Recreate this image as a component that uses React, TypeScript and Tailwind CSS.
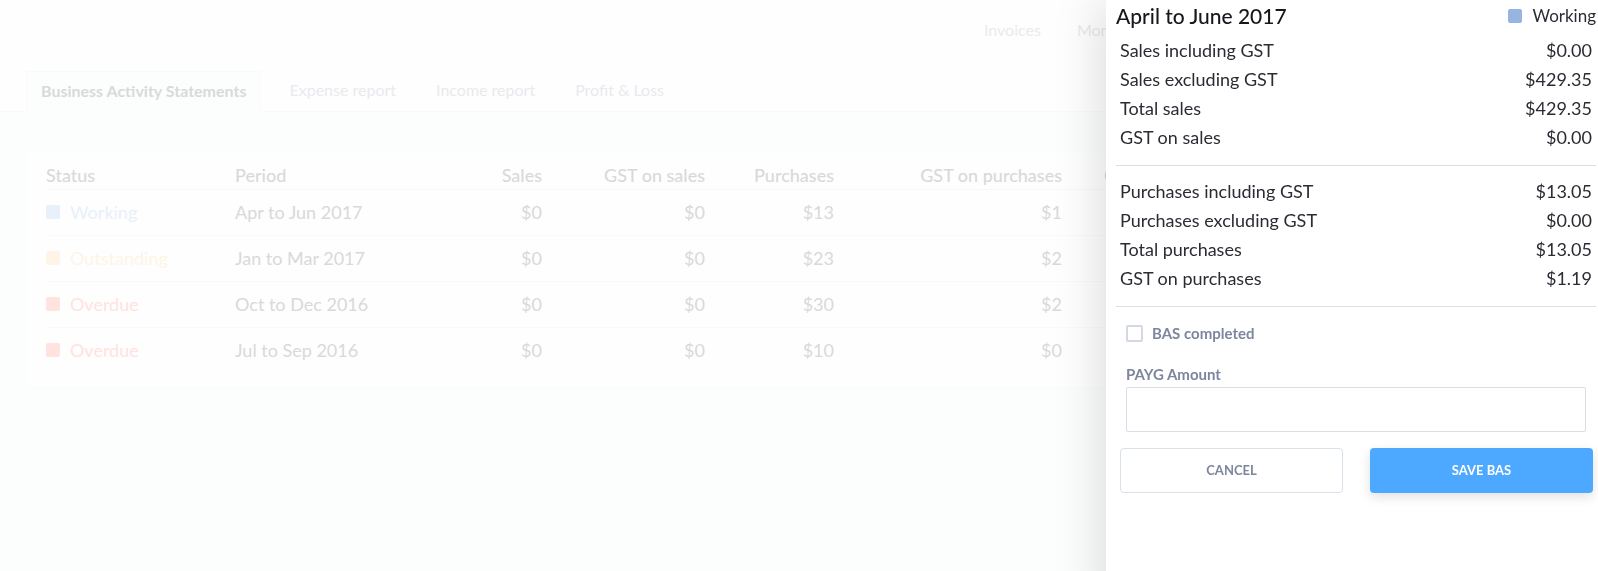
type Status = "Working" | "Outstanding" | "Overdue";

const tabs = ["Expense report", "Income report", "Profit & Loss"];

const statements: { status: Status; cells: string[] }[] = [
  { status: "Working", cells: ["Apr to Jun 2017", "$0", "$0", "$13", "$1"] },
  { status: "Outstanding", cells: ["Jan to Mar 2017", "$0", "$0", "$23", "$2"] },
  { status: "Overdue", cells: ["Oct to Dec 2016", "$0", "$0", "$30", "$2"] },
  { status: "Overdue", cells: ["Jul to Sep 2016", "$0", "$0", "$10", "$0"] },
];

const statusStyle: Record<Status, { box: string; text: string }> = {
  Working: { box: "bg-[#e8f0fa]", text: "text-[#e8f0fa]" },
  Outstanding: { box: "bg-[#fff4e6]", text: "text-[#fff4e6]" },
  Overdue: { box: "bg-[#ffe3df]", text: "text-[#ffe3df]" },
};

const sales = [
  ["Sales including GST", "$0.00"],
  ["Sales excluding GST", "$429.35"],
  ["Total sales", "$429.35"],
  ["GST on sales", "$0.00"],
];

const purchases = [
  ["Purchases including GST", "$13.05"],
  ["Purchases excluding GST", "$0.00"],
  ["Total purchases", "$13.05"],
  ["GST on purchases", "$1.19"],
];

function Summary({ rows, line }: { rows: string[][]; line: string }) {
  return (
    <dl className={`border-b px-1 pt-2.5 pb-3.5 text-lg ${line}`}>
      {rows.map(([label, value]) => (
        <div key={label} className="flex h-[29px] items-center justify-between">
          <dt>{label}</dt>
          <dd>{value}</dd>
        </div>
      ))}
    </dl>
  );
}

function StatementsTable() {
  return (
    <table className="w-full table-fixed text-left text-lg text-[#d9d9d9]">
      <colgroup>
        <col className="w-[189px]" />
        <col className="w-[190px]" />
        <col className="w-[117px]" />
        <col className="w-[163px]" />
        <col className="w-[129px]" />
        <col className="w-[228px]" />
        <col />
      </colgroup>
      <thead>
        <tr className="h-7 border-b border-[#f7f8f9]">
          <th className="p-0 font-medium">Status</th>
          <th className="p-0 font-medium">Period</th>
          <th className="p-0 text-right font-medium">Sales</th>
          <th className="p-0 text-right font-medium">GST on sales</th>
          <th className="p-0 text-right font-medium">Purchases</th>
          <th className="p-0 text-right font-medium">GST on purchases</th>
          <th className="p-0 pl-[42px] font-medium">GST</th>
        </tr>
      </thead>
      <tbody>
        {statements.map(({ status, cells }) => (
          <tr key={cells[0]} className="h-[46px] border-b border-[#fafafb] last:border-0">
            <td className="p-0 pb-0.5">
              <span className="flex items-center gap-2.5">
                <span className={`size-3.5 rounded-xs ${statusStyle[status].box}`} />
                <span className={statusStyle[status].text}>{status}</span>
              </span>
            </td>
            {cells.map((cell, i) => (
              <td key={i} className={i === 0 ? "p-0 pb-0.5" : "p-0 pb-0.5 text-right"}>
                {cell}
              </td>
            ))}
            <td />
          </tr>
        ))}
      </tbody>
    </table>
  );
}

export default function App() {
  return (
    <div className="flex min-h-screen flex-col overflow-x-hidden bg-[#fcfefe] font-['Lato','Open_Sans',sans-serif]">
      <header className="border-b border-[#f9fafa] bg-[#fefefe] text-base text-[#e9eaee]">
        <nav className="flex h-[71px] items-start justify-end gap-9 pt-[18px] pr-[472px]">
          <a href="#invoices">Invoices</a>
          <a href="#money">Money</a>
        </nav>
        <nav className="flex h-10 items-stretch pl-[26px]">
          <a
            href="#bas"
            className="-mb-px flex items-center rounded-t-xs border border-b-0 border-[#f9fafa] bg-[#fcfefe] px-3.5 pb-0.5 font-bold text-[#d9d9d9]"
          >
            Business Activity Statements
          </a>
          <div className="flex items-center gap-10 pb-0.5 pl-7">
            {tabs.map((tab) => (
              <a key={tab} href="#reports">
                {tab}
              </a>
            ))}
          </div>
        </nav>
      </header>

      <main className="px-[26px] pt-10">
        <section className="rounded-sm border-b border-[#fafbfb] bg-[#fefefe] px-5 pt-[9px] pb-[13px]">
          <StatementsTable />
        </section>
      </main>

      <aside className="fixed top-0 right-0 -bottom-12 w-[492px] bg-white pr-0.5 pl-2.5 text-[#2b2c33] shadow-[0_0_50px_rgba(0,0,0,0.16)]">
        <header className="flex h-6 items-center justify-between pt-2">
          <h2 className="text-[21px] font-medium text-[#16171c]">April to June 2017</h2>
          <p className="flex items-center gap-2.5 text-[17px]">
            <span className="size-3.5 rounded-xs bg-[#96b5e0]" />
            Working
          </p>
        </header>
        <div className="pt-px">
          <Summary rows={sales} line="border-[#d9dee7]" />
          <Summary rows={purchases} line="border-[#dcdfe3]" />
        </div>

        <form className="pt-[17px]" onSubmit={(e) => e.preventDefault()}>
          <div className="px-2.5 text-[#7c869c]">
            <label className="flex h-[18px] items-center gap-[9px] text-[15px] font-bold">
              <input
                type="checkbox"
                className="size-[17px] appearance-none rounded-xs border-2 border-[#d3d8e3] bg-white checked:bg-[#4da9ff]"
              />
              BAS completed
            </label>
            <label htmlFor="payg" className="mt-[22px] block h-[23px] text-[15px] leading-5 font-bold">
              PAYG Amount
            </label>
            <input
              id="payg"
              type="text"
              className="block h-[45px] w-full rounded-xs border border-[#d9dde5] bg-white px-3 text-[#2b2c33]"
            />
          </div>
          <div className="mt-4 grid grid-cols-2 gap-[27px] pr-[3px] pl-1 text-[13px] font-bold">
            <button type="button" className="h-[45px] rounded-sm border border-[#dae0e8] bg-white text-[#7c869c]">
              CANCEL
            </button>
            <button
              type="submit"
              className="h-[45px] rounded-sm bg-[#4da9ff] text-white shadow-[0_4px_12px_rgba(0,0,0,0.12)]"
            >
              SAVE BAS
            </button>
          </div>
        </form>
      </aside>
    </div>
  );
}
